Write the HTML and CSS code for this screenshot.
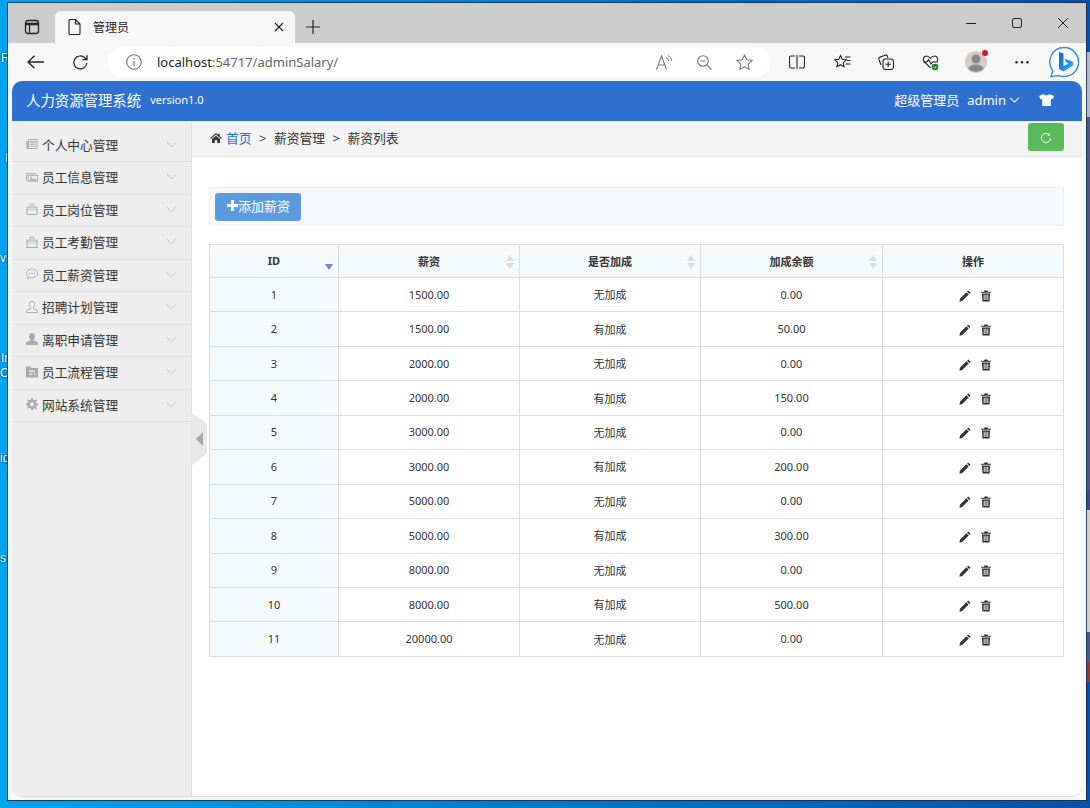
FILE: index.html
```html
<!DOCTYPE html>
<html lang="zh-CN">
<head>
    <meta charset="UTF-8">
    <meta name="viewport" content="width=device-width, initial-scale=1.0">
    <title>管理员</title>
    <link rel="stylesheet" href="styles.css">
</head>
<body>

<svg class="sprites" aria-hidden="true">
    <defs>
        <linearGradient id="bing-b" x1="0" y1="0" x2="1" y2="1"><stop offset="0" stop-color="#1b5fd0"/><stop offset=".6" stop-color="#1f8ee8"/><stop offset="1" stop-color="#35c8e8"/></linearGradient>
    </defs>
    <symbol id="i-chev" viewBox="0 0 12 7"><path d="M1 1l5 5 5-5" fill="none" stroke="currentColor" stroke-width="1"/></symbol>
    <symbol id="i-news" viewBox="0 0 12 12"><path d="M2 1h9.500v10H1.500a1 1 0 0 1-1-1V3h1.500zM3 2v8h7.500V2zM4 3.200h5.500v1.600H4zM4 5.800h5.500v1H4zM4 7.800h5.500v1H4z" fill="currentColor" fill-rule="evenodd"/></symbol>
    <symbol id="i-pic" viewBox="0 0 14 11"><path d="M0 1h12v1H1v8H0zM2 3h12v8H2zM3 4v6h10V4zM4 9.500l2.500-3 2 2 1.500-1.500 2.500 2.500zM5 4.800h1.500v1.500H5z" fill="currentColor" fill-rule="evenodd"/></symbol>
    <symbol id="i-bag" viewBox="0 0 12 13"><path d="M3.500 4V3a2.500 2.500 0 0 1 5 0v1H12v9H0V4zM4.500 4h3V3a1.500 1.500 0 0 0-3 0zM1 5v7h10V5z" fill="currentColor" fill-rule="evenodd"/><rect x="1" y="5" width="10" height="3" fill="currentColor" opacity=".35"/></symbol>
    <symbol id="i-chat" viewBox="0 0 13 12"><path d="M6.500.5c3.300 0 6 2.100 6 4.800s-2.700 4.800-6 4.800c-.6 0-1.200 0-1.700-.2L2 11.500l.5-2.600C1.200 8 .5 6.700.5 5.300.5 2.600 3.200.5 6.500.5z" fill="none" stroke="currentColor"/><path d="M3.500 4.700h1.300V6H3.500zM5.900 4.700h1.300V6H5.900zM8.300 4.700h1.300V6H8.300z" fill="currentColor"/></symbol>
    <symbol id="i-user" viewBox="0 0 12 12"><path d="M6 .5c1.700 0 2.700 1.300 2.700 3 0 1.200-.5 2.300-1.200 2.900v1.200l3.700 1.600c.4.200.3 2.300.3 2.300H.5s-.1-2.100.3-2.300l3.700-1.600V6.400C3.800 5.800 3.300 4.700 3.300 3.500c0-1.700 1-3 2.700-3z" fill="none" stroke="currentColor"/></symbol>
    <symbol id="i-user2" viewBox="0 0 12 12"><path d="M6 0c1.900 0 3 1.400 3 3.300 0 1.300-.5 2.500-1.300 3.100v1l4 1.700c.4.200.3 2.900.3 2.900H0s-.1-2.700.3-2.900l4-1.700v-1C3.500 5.800 3 4.600 3 3.300 3 1.400 4.100 0 6 0z" fill="currentColor"/></symbol>
    <symbol id="i-flow" viewBox="0 0 12 11"><path d="M0 0h5v1.500h7V11H0zM3 4v1.500h6V4zM3 7v1.500h3.500V7zM8 7v1.500h1.500V7z" fill="currentColor" fill-rule="evenodd"/></symbol>
    <symbol id="i-cog" viewBox="0 0 12 12"><path d="M5 0h2l.3 1.700 1.200.5L10 1.200 11 2.800 9.800 4l.4 1.200 1.800.3v2l-1.800.3-.4 1.200L11 10l-1 1.200-1.500-1-1.200.5L7 12H5l-.3-1.700-1.200-.5-1.500 1L1 10l1.200-1.200L1.800 7.600 0 7.300v-2l1.800-.3L2.200 4 1 2.800l1-1.600 1.500 1 1.200-.5zM6 4.300a2 2 0 1 0 0 4 2 2 0 0 0 0-4z" fill="currentColor" fill-rule="evenodd"/></symbol>
    <symbol id="i-pencil" viewBox="0 0 13 13"><path d="M10 .5l2.500 2.500-1.300 1.300-2.500-2.500zM8 2.500L10.500 5 3.500 12 .5 12.800 1 9.500z" fill="currentColor"/></symbol>
    <symbol id="i-trash" viewBox="0 0 11 12"><path d="M3.800 0h3.400l.5 1.200H11v1.300H0V1.200h3.300zM1 3.200h9l-.6 8.800H1.600zM3 4.500v6h1v-6zM5 4.500v6h1v-6zM7 4.500v6h1v-6z" fill="currentColor" fill-rule="evenodd"/></symbol>
</svg>

<div class="desktop">
    <span class="desk-label desk-r">R</span>
    <span class="desk-label desk-i">I</span>
    <span class="desk-label desk-vi">vi</span>
    <span class="desk-label desk-ir">Ir</span>
    <span class="desk-label desk-cc">Cc</span>
    <span class="desk-label desk-iq">iq</span>
    <span class="desk-label desk-sk">sk</span>
    <div class="behind behind-a"></div>
    <div class="behind behind-b"></div>
    <div class="behind behind-c"></div>
    <div class="behind behind-d"></div>
    <div class="behind behind-e"></div>

    <div class="window">
        <div class="tabstrip">
            <svg class="tab-pane" width="16" height="16" viewBox="0 0 16 16"><rect x="1.500" y="1.500" width="13" height="13" rx="2.500" fill="none" stroke="#222" stroke-width="1.300"/><path d="M1.500 5h13" stroke="#222" stroke-width="2.500"/><path d="M5.500 5v9" stroke="#222" stroke-width="1.200"/></svg>
            <div class="tab">
                <svg width="13" height="16" viewBox="0 0 13 16"><path d="M1 1.500a1 1 0 0 1 1-1h5.500L12 5v9.500a1 1 0 0 1-1 1H2a1 1 0 0 1-1-1zM7.500.5V5H12" fill="none" stroke="#222" stroke-width="1.100"/></svg>
                <span class="tab-title">管理员</span>
                <svg class="tab-close" width="10" height="10" viewBox="0 0 10 10"><path d="M1 1l8 8M9 1l-8 8" stroke="#222" stroke-width="1.200"/></svg>
            </div>
            <svg class="tab-new" width="14" height="14" viewBox="0 0 14 14"><path d="M7 0v14M0 7h14" stroke="#222" stroke-width="1.200"/></svg>
            <div class="win-controls">
                <svg width="10" height="10" viewBox="0 0 10 10"><path d="M0 5.500h10" stroke="#222"/></svg>
                <svg width="10" height="10" viewBox="0 0 10 10"><rect x=".5" y=".5" width="9" height="9" rx="1.500" fill="none" stroke="#222"/></svg>
                <svg width="10" height="10" viewBox="0 0 10 10"><path d="M0 0l10 10M10 0L0 10" stroke="#222"/></svg>
            </div>
        </div>

        <div class="toolbar">
            <svg class="tool-back" width="18" height="14" viewBox="0 0 18 14"><path d="M17 7H1M7.500.8L1 7l6.500 6.200" fill="none" stroke="#222" stroke-width="1.300"/></svg>
            <svg class="tool-reload" width="17" height="17" viewBox="0 0 17 17"><path d="M14.800 9a6.500 6.500 0 1 1-2-5.300l2 1.800M15 1v4.600h-4.600" fill="none" stroke="#222" stroke-width="1.200"/></svg>
            <div class="address">
                <svg width="16" height="16" viewBox="0 0 16 16"><circle cx="8" cy="8" r="7.300" fill="none" stroke="#777" stroke-width="1.100"/><path d="M8 7v5M8 4v1.500" stroke="#777" stroke-width="1.200"/></svg>
                <span class="url"><b>localhost</b>:54717/adminSalary/</span>
                <svg class="addr-read" width="17" height="15" viewBox="0 0 17 15"><path d="M.5 14.500L5.500 1l5 13.500M2.300 10h6.400" fill="none" stroke="#777" stroke-width="1.100"/><path d="M10 2.500c1.500.8 2.300 2 2.500 3.500M12 .5c2 1 3.500 3 3.800 5.500" fill="none" stroke="#777"/></svg>
                <svg class="addr-zoom" width="15" height="15" viewBox="0 0 15 15"><circle cx="6" cy="6" r="5.300" fill="none" stroke="#777" stroke-width="1.100"/><path d="M3.500 6h5M10 10l4.500 4.500" stroke="#777" stroke-width="1.100"/></svg>
                <svg class="addr-star" width="17" height="16" viewBox="0 0 17 16"><path d="M8.500 1l2.300 4.800 5.200.7-3.800 3.600.9 5.200-4.600-2.500-4.600 2.500.9-5.200L1 6.500l5.200-.7z" fill="none" stroke="#777" stroke-width="1.100"/></svg>
            </div>
            <svg class="tool-split" width="16" height="14" viewBox="0 0 16 14"><path d="M6 1H2a1.500 1.500 0 0 0-1.500 1.500v9A1.500 1.500 0 0 0 2 13h4M10 1h4a1.500 1.500 0 0 1 1.500 1.500v9A1.500 1.500 0 0 1 14 13h-4M8 0v14" fill="none" stroke="#222" stroke-width="1.100"/></svg>
            <svg class="tool-fav" width="17" height="16" viewBox="0 0 17 16"><path d="M6.500 1.500l1.700 3.800 4 .5-3 2.800.8 4.100-3.500-2-3.500 2 .8-4.100-3-2.800 4-.5z" fill="none" stroke="#222" stroke-width="1.100"/><path d="M11 3h5.500M13 6.500h3.500M11.500 10h5" stroke="#222" stroke-width="1.100"/></svg>
            <svg class="tool-coll" width="16" height="16" viewBox="0 0 16 16"><path d="M3 11L1 5.500a2 2 0 0 1 1.200-2.500L7 1.200c1-.3 2 .1 2.400 1L10 4" fill="none" stroke="#222" stroke-width="1.100"/><rect x="5" y="5" width="10.500" height="10.500" rx="2.500" fill="none" stroke="#222" stroke-width="1.100"/><path d="M10.200 7.500v5.500M7.500 10.200H13" stroke="#222" stroke-width="1.100"/></svg>
            <svg class="tool-health" width="17" height="17" viewBox="0 0 17 17"><path d="M8.500 14L2 7.500C.5 5.500 1.500 2 4.500 2c1.800 0 3 1 4 2.300C9.500 3 10.700 2 12.500 2c3 0 4 3.500 2.500 5.500" fill="none" stroke="#222" stroke-width="1.100"/><path d="M1 8h4l1.500-2.500L9 10l1.500-2H16" fill="none" stroke="#222" stroke-width="1.100"/><circle cx="13" cy="13" r="3.300" fill="#1d7d36"/><path d="M11.500 13l1.100 1.100 1.900-2" fill="none" stroke="#fff" stroke-width=".8"/></svg>
            <div class="avatar">
                <svg width="22" height="22" viewBox="0 0 22 22"><circle cx="11" cy="11" r="11" fill="#d0cecc"/><circle cx="11" cy="8" r="4.500" fill="#8a8886"/><path d="M3.500 18c1-3.500 4-4.500 7.500-4.500s6.500 1 7.500 4.500a11 11 0 0 1-15 0z" fill="#8a8886"/></svg>
                <i class="avatar-dot"></i>
            </div>
            <svg class="tool-more" width="14" height="3" viewBox="0 0 14 3"><path d="M1.500 0a1.300 1.300 0 1 0 0 2.600 1.300 1.300 0 0 0 0-2.600zM7 0a1.300 1.300 0 1 0 0 2.600A1.300 1.300 0 0 0 7 0zM12.500 0a1.300 1.300 0 1 0 0 2.600 1.300 1.300 0 0 0 0-2.600z" fill="#222"/></svg>
            <svg class="tool-bing" width="32" height="32" viewBox="0 0 32 32"><path d="M16 1.500a14.500 14.500 0 1 1-5 28.100L3 30.500l1.800-5.700A14.500 14.500 0 0 1 16 1.500z" fill="#fff" stroke="#2f8cea" stroke-width="1.400"/><path d="M11 6l4.500 1.500v12.800l5-2.900-2.400-1.100-1.500-3.600 8.400 3v4.100l-9.700 5.600L11 23z" fill="url(#bing-b)"/></svg>
        </div>

        <div class="app">
            <header class="topbar">
                <span class="brand">人力资源管理系统</span>
                <span class="version">version1.0</span>
                <span class="role">超级管理员</span>
                <span class="username">admin</span>
                <svg class="user-caret" width="11" height="6" viewBox="0 0 12 7"><path d="M1 1l5 5 5-5" fill="none" stroke="#fff" stroke-width="1.200"/></svg>
                <svg class="skin" width="15" height="12" viewBox="0 0 15 12"><path d="M4.500 0c.8 1 1.800 1.400 3 1.400S9.700 1 10.500 0L15 2l-1.300 3.200-1.900-.6V12H3.200V4.600l-1.900.6L0 2z" fill="#fff"/></svg>
            </header>

            <div class="layout">
                <nav class="sidebar">
                    <a class="side-item"><svg class="side-icon"><use href="#i-news"/></svg>个人中心管理<svg class="side-caret"><use href="#i-chev"/></svg></a>
                    <a class="side-item"><svg class="side-icon"><use href="#i-pic"/></svg>员工信息管理<svg class="side-caret"><use href="#i-chev"/></svg></a>
                    <a class="side-item"><svg class="side-icon"><use href="#i-bag"/></svg>员工岗位管理<svg class="side-caret"><use href="#i-chev"/></svg></a>
                    <a class="side-item"><svg class="side-icon"><use href="#i-bag"/></svg>员工考勤管理<svg class="side-caret"><use href="#i-chev"/></svg></a>
                    <a class="side-item"><svg class="side-icon"><use href="#i-chat"/></svg>员工薪资管理<svg class="side-caret"><use href="#i-chev"/></svg></a>
                    <a class="side-item"><svg class="side-icon"><use href="#i-user"/></svg>招聘计划管理<svg class="side-caret"><use href="#i-chev"/></svg></a>
                    <a class="side-item"><svg class="side-icon"><use href="#i-user2"/></svg>离职申请管理<svg class="side-caret"><use href="#i-chev"/></svg></a>
                    <a class="side-item"><svg class="side-icon"><use href="#i-flow"/></svg>员工流程管理<svg class="side-caret"><use href="#i-chev"/></svg></a>
                    <a class="side-item"><svg class="side-icon"><use href="#i-cog"/></svg>网站系统管理<svg class="side-caret"><use href="#i-chev"/></svg></a>
                </nav>
                <div class="collapse"><i></i></div>

                <main class="main">
                    <div class="crumbs">
                        <svg class="crumb-home" width="12" height="10" viewBox="0 0 12 10"><path d="M6 0l2 1.700V.7h1.700v2.500L12 5.200l-.7.800L6 1.500.7 6 0 5.200zM6 2.700l4 3.400V10H7.200V7H4.800v3H2V6.100z" fill="#333"/></svg>
                        <a class="crumb-link">首页</a>
                        <span class="crumb-sep">&gt;</span>
                        <span>薪资管理</span>
                        <span class="crumb-sep">&gt;</span>
                        <span>薪资列表</span>
                        <button class="refresh" aria-label="刷新">
                            <svg width="12" height="12" viewBox="0 0 12 12"><path d="M10.500 6A4.500 4.500 0 1 1 6 1.500c1.400 0 2.500.6 3.300 1.500" fill="none" stroke="#fff" stroke-width="1"/><path d="M9.700 1v2.800H7.200z" fill="#fff"/></svg>
                        </button>
                    </div>

                    <div class="content">
                        <div class="actions">
                            <button class="btn-add"><svg width="11" height="11" viewBox="0 0 11 11"><path d="M5.500 0v11M0 5.500h11" stroke="#fff" stroke-width="3"/></svg>添加薪资</button>
                        </div>

                        <table class="grid">
                            <thead>
                                <tr>
                                    <th class="col-id">ID<span class="sort sort-active"></span></th>
                                    <th class="col-a">薪资<span class="sort"></span></th>
                                    <th class="col-a">是否加成<span class="sort"></span></th>
                                    <th class="col-b">加成余额<span class="sort"></span></th>
                                    <th class="col-c">操作</th>
                                </tr>
                            </thead>
                            <tbody>
                                <tr><td class="cell-id">1</td><td>1500.00</td><td>无加成</td><td>0.00</td><td class="cell-ops"><svg class="op"><use href="#i-pencil"/></svg><svg class="op op-del"><use href="#i-trash"/></svg></td></tr>
                                <tr><td class="cell-id">2</td><td>1500.00</td><td>有加成</td><td>50.00</td><td class="cell-ops"><svg class="op"><use href="#i-pencil"/></svg><svg class="op op-del"><use href="#i-trash"/></svg></td></tr>
                                <tr><td class="cell-id">3</td><td>2000.00</td><td>无加成</td><td>0.00</td><td class="cell-ops"><svg class="op"><use href="#i-pencil"/></svg><svg class="op op-del"><use href="#i-trash"/></svg></td></tr>
                                <tr><td class="cell-id">4</td><td>2000.00</td><td>有加成</td><td>150.00</td><td class="cell-ops"><svg class="op"><use href="#i-pencil"/></svg><svg class="op op-del"><use href="#i-trash"/></svg></td></tr>
                                <tr><td class="cell-id">5</td><td>3000.00</td><td>无加成</td><td>0.00</td><td class="cell-ops"><svg class="op"><use href="#i-pencil"/></svg><svg class="op op-del"><use href="#i-trash"/></svg></td></tr>
                                <tr><td class="cell-id">6</td><td>3000.00</td><td>有加成</td><td>200.00</td><td class="cell-ops"><svg class="op"><use href="#i-pencil"/></svg><svg class="op op-del"><use href="#i-trash"/></svg></td></tr>
                                <tr><td class="cell-id">7</td><td>5000.00</td><td>无加成</td><td>0.00</td><td class="cell-ops"><svg class="op"><use href="#i-pencil"/></svg><svg class="op op-del"><use href="#i-trash"/></svg></td></tr>
                                <tr><td class="cell-id">8</td><td>5000.00</td><td>有加成</td><td>300.00</td><td class="cell-ops"><svg class="op"><use href="#i-pencil"/></svg><svg class="op op-del"><use href="#i-trash"/></svg></td></tr>
                                <tr><td class="cell-id">9</td><td>8000.00</td><td>无加成</td><td>0.00</td><td class="cell-ops"><svg class="op"><use href="#i-pencil"/></svg><svg class="op op-del"><use href="#i-trash"/></svg></td></tr>
                                <tr><td class="cell-id">10</td><td>8000.00</td><td>有加成</td><td>500.00</td><td class="cell-ops"><svg class="op"><use href="#i-pencil"/></svg><svg class="op op-del"><use href="#i-trash"/></svg></td></tr>
                                <tr><td class="cell-id">11</td><td>20000.00</td><td>无加成</td><td>0.00</td><td class="cell-ops"><svg class="op"><use href="#i-pencil"/></svg><svg class="op op-del"><use href="#i-trash"/></svg></td></tr>
                            </tbody>
                        </table>
                    </div>
                </main>
            </div>
        </div>
    </div>
</div>

</body>
</html>
```

FILE: styles.css
```css
* {
    box-sizing: border-box;
}
html, body {
    margin: 0;
    padding: 0;
    overflow: hidden;
}
body {
    font-family: "Noto Sans", "Noto Sans CJK SC", sans-serif;
    font-size: 13px;
    color: #333;
}
.sprites {
    position: absolute;
    width: 0;
    height: 0;
}

/* desktop behind the browser */
.desktop {
    position: relative;
    width: 1090px;
    height: 808px;
    overflow: hidden;
    background: linear-gradient(90deg, #00a4ee 0%, #0072c4 60%, #0a50a6 100%);
}
.desk-label {
    position: absolute;
    left: 0;
    white-space: nowrap;
    font: 12px "Liberation Sans", sans-serif;
    color: #fff;
    text-shadow: 0 0 2px #000;
    line-height: 14px;
}
.desk-r { top: 51px; left: 1px; }
.desk-i { top: 151px; left: 5px; }
.desk-vi { top: 251px; }
.desk-ir { top: 351px; left: 1px; }
.desk-cc { top: 366px; }
.desk-iq { top: 451px; }
.desk-sk { top: 551px; }
.behind {
    position: absolute;
    left: 1086px;
    width: 4px;
}
.behind-a { top: 52px; height: 65px; background: #b6bace; }
.behind-b { top: 117px; height: 373px; background: #4e5a84; }
.behind-c { top: 490px; height: 20px; background: #3e4a80; }
.behind-d { top: 510px; height: 122px; background: #d0d0d0; }
.behind-e { top: 632px; height: 50px; background: linear-gradient(#4c5c88 60%, #8a4038 60%); }

/* browser window */
.window {
    position: absolute;
    left: 8px;
    top: 3px;
    width: 1078px;
    height: 797px;
    display: flex;
    flex-direction: column;
    background: #f7f7f7;
    box-shadow: 0 0 0 1px rgba(20, 45, 80, 0.85);
}
.tabstrip {
    height: 40px;
    flex: none;
    display: flex;
    align-items: flex-end;
    background: #cccccc;
}
.tab-pane {
    margin: 0 0 8px 16px;
}
.tab {
    width: 240px;
    height: 32px;
    margin-left: 15px;
    padding: 0 11px 0 13px;
    display: flex;
    align-items: center;
    background: #f7f7f7;
    border-radius: 6px 6px 0 0;
}
.tab-title {
    margin-left: 12px;
    font-size: 12px;
    color: #222;
}
.tab-close {
    margin-left: auto;
}
.tab-new {
    margin: 0 0 9px 11px;
}
.win-controls {
    margin: 0 18px 15px auto;
    display: flex;
    gap: 36px;
}
.toolbar {
    height: 38px;
    flex: none;
    display: flex;
    align-items: center;
}
.tool-back { margin-left: 19px; }
.tool-reload { margin-left: 27px; }
.address {
    width: 662px;
    height: 30px;
    margin-left: 19px;
    padding-left: 18px;
    display: flex;
    align-items: center;
    background: #fff;
    border-radius: 15px;
}
.url {
    margin-left: 15px;
    font-size: 13px;
    color: #666;
}
.url b {
    font-weight: 400;
    color: #222;
}
.addr-read { margin-left: auto; }
.addr-zoom { margin-left: 24px; }
.addr-star { margin: 0 17px 0 24px; }
.tool-split { margin-left: 19px; }
.tool-fav { margin-left: 29px; }
.tool-coll { margin-left: 27px; }
.tool-health { margin-left: 28px; }
.avatar {
    position: relative;
    width: 22px;
    height: 22px;
    margin-left: 26px;
}
.avatar svg {
    display: block;
}
.avatar-dot {
    position: absolute;
    top: -1px;
    right: -1px;
    width: 6px;
    height: 6px;
    border-radius: 50%;
    background: #e81123;
}
.tool-more { margin-left: 28px; }
.tool-bing { margin-left: 19px; flex: none; }

/* the admin page */
.app {
    flex: 1;
    min-height: 0;
    margin: 0 4px 3px;
    display: flex;
    flex-direction: column;
    background: #fff;
    border-radius: 10px;
    border-bottom: 1px solid #ddd;
    overflow: hidden;
}
.topbar {
    height: 40px;
    flex: none;
    padding: 0 28px 3px 14px;
    display: flex;
    align-items: center;
    background: #2f6fd0;
    color: #fff;
}
.brand {
    font-size: 14.4px;
}
.version {
    margin-left: 9px;
    font-size: 11px;
}
.role {
    margin-left: auto;
    font-size: 13px;
}
.username {
    margin-left: 8px;
    font-size: 13px;
}
.user-caret {
    margin-left: 3px;
}
.skin {
    margin-left: 19px;
}
.layout {
    position: relative;
    flex: 1;
    min-height: 0;
    display: flex;
}
.sidebar {
    width: 180px;
    flex: none;
    padding-top: 8.5px;
    background: #eeeeee;
    border-right: 1px solid #e2e2e2;
    font-size: 12.7px;
}
.side-item {
    height: 32.5px;
    padding: 0 14px 2px;
    display: flex;
    align-items: center;
    border-bottom: 1px solid #e2e2e2;
    color: #333;
}
.side-icon {
    width: 12px;
    height: 12px;
    margin-right: 4px;
    flex: none;
    color: #a9a9ae;
}
.side-caret {
    width: 11px;
    height: 7px;
    margin-left: auto;
    color: #bdbdbd;
}
.collapse {
    position: absolute;
    left: 179px;
    top: 291px;
    width: 16px;
    height: 54px;
    background: #e8e8e8;
    clip-path: polygon(0 0, 100% 22%, 100% 78%, 0 100%);
}
.collapse i {
    position: absolute;
    left: 5px;
    top: 20px;
    border: 7px solid transparent;
    border-left-width: 0;
    border-right: 7px solid #a8a8a8;
}
.main {
    flex: 1;
    min-width: 0;
}
.crumbs {
    height: 36px;
    padding: 0 18px 2px;
    display: flex;
    align-items: center;
    background: #f4f4f4;
    border-bottom: 1px solid #e5e5e5;
    font-size: 12.8px;
}
.crumb-home {
    margin-right: 4px;
}
.crumb-link {
    color: #1a73d0;
}
.crumb-sep {
    margin: 0 7.5px;
}
.refresh {
    width: 36px;
    height: 28px;
    margin-left: auto;
    margin-top: -1px;
    padding: 4px 0 0;
    border: none;
    border-radius: 3px;
    background: #5cb85c;
}
.content {
    padding: 30px 18px 0 17px;
}
.actions {
    height: 39px;
    padding: 5px;
    margin-bottom: 18px;
    background: #f5f9fd;
    border: 1px solid #e9eef3;
}
.btn-add {
    width: 86px;
    height: 28px;
    padding: 0 0 3px 1px;
    display: flex;
    align-items: center;
    justify-content: center;
    font: 13px "Noto Sans", "Noto Sans CJK SC", sans-serif;
    color: #fff;
    background: #5c9bdf;
    border: none;
    border-radius: 3px;
}
.grid {
    width: 854px;
    table-layout: fixed;
    border-collapse: collapse;
    font-size: 11px;
    color: #333;
}
.grid th, .grid td {
    padding: 0 0 1px;
    text-align: center;
    border: 1px solid #dddddd;
}
.grid th {
    position: relative;
    height: 33px;
    background: #f5fafe;
    font-weight: 700;
}
.grid td {
    height: 34.45px;
}
.col-id { width: 129px; }
.col-a { width: 181px; }
.col-b { width: 182px; }
.col-c { width: 181px; }
.grid .cell-id {
    background: #f5fafe;
}
.grid .cell-ops {
    padding-left: 4px;
}
.sort {
    position: absolute;
    right: 5px;
    top: 10px;
    width: 8px;
    height: 14px;
}
.sort::before, .sort::after {
    content: "";
    position: absolute;
    left: 0;
    border-left: 4px solid transparent;
    border-right: 4px solid transparent;
}
.sort::before {
    top: 0;
    border-bottom: 6px solid #dddddd;
}
.sort::after {
    bottom: 0;
    border-top: 6px solid #dddddd;
}
.sort-active::before {
    display: none;
}
.sort-active::after {
    border-top-color: #7b7be0;
    bottom: -1px;
}
.op {
    width: 12px;
    height: 12px;
    vertical-align: -3px;
    color: #333;
}
.op-del {
    width: 10px;
    margin-left: 10px;
}
```
